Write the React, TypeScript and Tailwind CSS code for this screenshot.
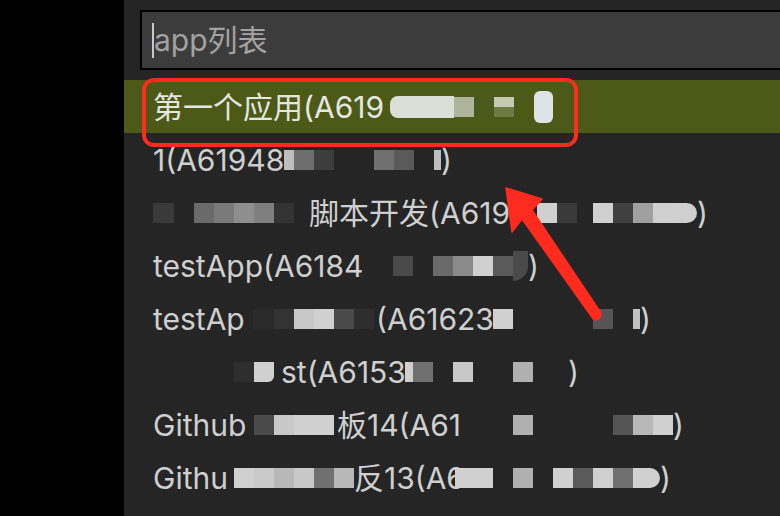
import React from 'react';

// one piece of a row: real text, or a mosaic cell (the redacted bits)
type Seg =
    | {t: string; w?: number}
    | {c: string; w: number; h?: number; r?: string; c2?: string};

const T = (t: string, w?: number): Seg => ({t, w});
const C = (c: string, w: number, h?: number, r?: string, c2?: string): Seg => ({c, w, h, r, c2});
const G = (w: number): Seg => ({c: '', w});

const rows: Seg[][] = [
    [
        T('第一个应用(A619', 237),
        C('#dcdfd6', 64, 22, 'rounded-l-lg'),
        C('#aeb59c', 20),
        C('#4a5a1d', 20),
        C('#c6cab5', 20, 20, '', '#6d7a44'),
        G(20),
        C('#dfe2e6', 19, 32, 'rounded-md'),
    ],
    [
        T('1(A61948', 131),
        C('#bdbdbd', 10),
        C('#6e6e6e', 20),
        C('#3d3d3d', 20),
        G(40),
        C('#707070', 20),
        C('#5a5a5a', 20),
        G(20),
        C('#bdbdbd', 7),
        T(')'),
    ],
    [
        C('#3a3a3a', 21),
        G(20),
        C('#6a6a6a', 20),
        C('#7a7a7a', 20),
        C('#8e8e8e', 20),
        C('#7f7f7f', 20),
        C('#333333', 20),
        G(15),
        T('脚本开发(A619', 201),
        G(27),
        C('#d0d0d0', 20),
        C('#3a3a3a', 20),
        G(16),
        C('#d0d0d0', 20),
        C('#404040', 20),
        C('#a0a0a0', 20),
        C('#d0d0d0', 20),
        C('#cfcfcf', 24, 20, 'rounded-r-full'),
        T(')'),
    ],
    [
        T('testApp(A6184', 214),
        G(26),
        C('#4a4a4a', 20),
        G(20),
        C('#6a6a6a', 20),
        C('#8a8a8a', 20),
        C('#d0d0d0', 20),
        C('#5a5a5a', 20),
        C('#4a4a4a', 15, 30, 'rounded-br-full'),
        T(')'),
    ],
    [
        T('testAp', 100),
        C('#2a2a2a', 21),
        C('#333333', 20),
        C('#c8c8c8', 20),
        C('#d0d0d0', 20),
        C('#4a4a4a', 20),
        C('#2e2e2e', 20),
        G(2),
        T('(A61623', 117),
        C('#d0d0d0', 20),
        G(80),
        C('#555555', 20),
        G(20),
        C('#c0c0c0', 7),
        T(')'),
    ],
    [
        G(81),
        C('#2e2e2e', 20),
        C('#d0d0d0', 20, 20, 'rounded-br-md'),
        G(7),
        T('st(A6153', 124),
        C('#d0d0d0', 8),
        C('#707070', 20),
        G(20),
        C('#c8c8c8', 20),
        G(40),
        C('#b0b0b0', 20),
        G(35),
        T(')'),
    ],
    [
        T('Github', 97),
        G(4),
        C('#4a4a4a', 20),
        C('#c8c8c8', 20),
        C('#d0d0d0', 20),
        C('#d0d0d0', 20),
        G(3),
        T('板14(A61', 133),
        G(43),
        C('#b0b0b0', 20),
        G(80),
        C('#555555', 20),
        C('#b8b8b8', 20),
        C('#d0d0d0', 20),
        T(')'),
    ],
    [
        T('Githu', 81),
        C('#d0d0d0', 20),
        C('#cacaca', 20),
        C('#b8b8b8', 20),
        C('#c8c8c8', 20),
        C('#707070', 20),
        C('#b8b8b8', 20),
        T('反13(A6', 101),
        C('#d0d0d0', 38),
        G(20),
        C('#b0b0b0', 20),
        G(20),
        C('#d0d0d0', 20),
        C('#5a5a5a', 20),
        C('#d0d0d0', 20),
        C('#707070', 20),
        C('#d0d0d0', 27, 20, 'rounded-r-full'),
        T(')'),
    ],
    [G(87), T('个应用模板12(A61')],
];

const Row = ({segs, active}: {segs: Seg[]; active?: boolean}) => (
    <div
        className={`flex h-[53px] shrink-0 items-center pl-[29px] whitespace-nowrap ${
            active ? 'bg-[#4c5917] text-[#e4e6e0]' : 'text-[#cfcfcf]'
        }`}
    >
        {segs.map((s, i) =>
            't' in s ? (
                <span key={i} className="shrink-0 overflow-visible" style={s.w ? {width: s.w} : undefined}>
                    {s.t}
                </span>
            ) : (
                <span
                    key={i}
                    className={`flex shrink-0 flex-col ${s.r ?? ''}`}
                    style={{width: s.w, height: s.h ?? 20, background: s.c || 'transparent'}}
                >
                    {s.c2 && <span className="mt-auto h-1/2" style={{background: s.c2}} />}
                </span>
            )
        )}
    </div>
);

export default function App() {
    return (
        <div
            className="relative flex h-[516px] w-[780px] overflow-hidden bg-black text-[30px] leading-none"
            style={{fontFamily: 'Inter, "Noto Sans CJK SC", sans-serif'}}
        >
            <div className="w-[124px] shrink-0 bg-black" />
            <div className="flex min-w-0 flex-1 flex-col bg-[#252526]">
                <div className="mt-[10px] ml-[16px] flex h-[60px] w-[680px] shrink-0 items-center border-2 border-black bg-[#3c3c3c] pl-[10px]">
                    <span className="h-[35px] w-[2px] bg-[#c8c8c8]" />
                    <span className="text-[#a3a3a3]">app列表</span>
                </div>
                <div className="mt-[10px] flex flex-col">
                    {rows.map((r, i) => (
                        <Row key={i} segs={r} active={i === 0} />
                    ))}
                </div>
            </div>

            {/* annotation: red box + arrow drawn over the list */}
            <div className="pointer-events-none absolute top-[78px] left-[142px] h-[69px] w-[436px] rounded-[12px] border-4 border-[#ff2b1e]" />
            <svg className="pointer-events-none absolute top-0 left-0" width="780" height="516" viewBox="0 0 780 516">
                <path
                    d="M506 188 L542 199 L532 210 L601 313 Q601 320 594 320 L522 219 L512 232 Z"
                    fill="#ff2b1e"
                    stroke="#ff2b1e"
                    strokeWidth="1.5"
                    strokeLinejoin="round"
                />
            </svg>
        </div>
    );
}
